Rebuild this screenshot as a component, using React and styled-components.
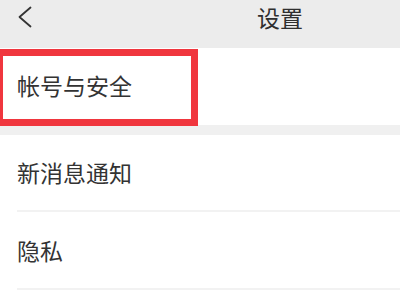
import React from "react";
import styled, { createGlobalStyle } from "styled-components";

const Global = createGlobalStyle`
  html, body { margin: 0; padding: 0; background: #ffffff; }
  body { font-family: "Noto Sans CJK SC", "Noto Sans", sans-serif; color: #333; overflow: hidden; }
`;

const Page = styled.div`
  width: 400px;
  height: 300px;
  display: flex;
  flex-direction: column;
  background: #ffffff;
  overflow: hidden;
`;

const Header = styled.div`
  height: 48px;
  flex: none;
  display: flex;
  align-items: center;
  background: #ececec;
  padding-left: 17px;
  box-sizing: border-box;
`;

const BackButton = styled.div`
  width: 16px;
  height: 22px;
  display: flex;
  align-items: center;
  margin-bottom: 14px;
`;

const Title = styled.div`
  margin-left: 224px;
  margin-bottom: 14px;
  font-size: 23px;
  line-height: 1;
  color: #2f2f2f;
`;

const Group = styled.div`
  display: flex;
  flex-direction: column;
  background: #ffffff;
`;

const Spacer = styled.div`
  height: 10px;
  flex: none;
  background: #f0f0f0;
`;

const Row = styled.div`
  position: relative;
  height: ${(p) => p.$h || 77}px;
  flex: none;
  display: flex;
  align-items: center;
  padding-left: 17px;
  box-sizing: border-box;
  font-size: 23px;
  color: #333;
  &::after {
    content: "";
    display: ${(p) => (p.$divider ? "block" : "none")};
    position: absolute;
    left: 17px;
    right: 0;
    bottom: 0;
    height: 2px;
    background: #f2f2f2;
  }
`;

const Label = styled.span`
  line-height: 1;
  margin-top: ${(p) => p.$mt || 0}px;
`;

const Highlight = styled.div`
  position: absolute;
  left: -4px;
  top: 1px;
  width: 202px;
  height: 77px;
  border: 7px solid #f0363e;
  box-sizing: border-box;
  pointer-events: none;
`;

export default function App() {
  return (
    <>
      <Global />
      <Page>
        <Header>
          <BackButton>
            <svg width="16" height="22" viewBox="0 0 16 22" fill="none">
              <path d="M13.5 1.5 L2.5 11 L13.5 20.5" stroke="#333" strokeWidth="1.8" strokeLinecap="round" strokeLinejoin="round" />
            </svg>
          </BackButton>
          <Title>设置</Title>
        </Header>
        <Group>
          <Row $h={77}>
            <Label $mt={-2}>帐号与安全</Label>
            <Highlight />
          </Row>
        </Group>
        <Spacer />
        <Group>
          <Row $h={77} $divider>
            <Label $mt={-2}>新消息通知</Label>
          </Row>
          <Row $h={78} $divider>
            <Label $mt={-2}>隐私</Label>
          </Row>
        </Group>
      </Page>
    </>
  );
}
